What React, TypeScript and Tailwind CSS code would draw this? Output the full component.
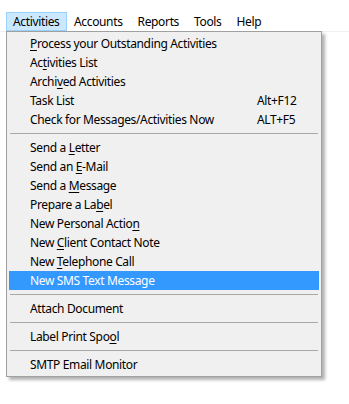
import React from 'react';

type MenuEntry =
  | { kind: 'sep' }
  | { kind: 'item'; label: string; mnemonic?: number; shortcut?: string; active?: boolean };

const MENU_BAR = ['Activities', 'Accounts', 'Reports', 'Tools', 'Help'];

// mnemonic = index of the underlined letter in label
const ENTRIES: MenuEntry[] = [
  { kind: 'item', label: 'Process your Outstanding Activities', mnemonic: 0 },
  { kind: 'item', label: 'Activities List', mnemonic: 2 },
  { kind: 'item', label: 'Archived Activities', mnemonic: 5 },
  { kind: 'item', label: 'Task List', shortcut: 'Alt+F12' },
  { kind: 'item', label: 'Check for Messages/Activities Now', shortcut: 'ALT+F5' },
  { kind: 'sep' },
  { kind: 'item', label: 'Send a Letter', mnemonic: 7 },
  { kind: 'item', label: 'Send an E-Mail', mnemonic: 8 },
  { kind: 'item', label: 'Send a Message', mnemonic: 7 },
  { kind: 'item', label: 'Prepare a Label', mnemonic: 12 },
  { kind: 'item', label: 'New Personal Action', mnemonic: 18 },
  { kind: 'item', label: 'New Client Contact Note', mnemonic: 4 },
  { kind: 'item', label: 'New Telephone Call', mnemonic: 4 },
  { kind: 'item', label: 'New SMS Text Message', active: true },
  { kind: 'sep' },
  { kind: 'item', label: 'Attach Document' },
  { kind: 'sep' },
  { kind: 'item', label: 'Label Print Spool', mnemonic: 15 },
  { kind: 'sep' },
  { kind: 'item', label: 'SMTP Email Monitor' },
];

function Label({ text, mnemonic }: { text: string; mnemonic?: number }) {
  if (mnemonic === undefined) return <span>{text}</span>;
  return (
    <span>
      {text.slice(0, mnemonic)}
      <span className="underline underline-offset-2">{text[mnemonic]}</span>
      {text.slice(mnemonic + 1)}
    </span>
  );
}

export default function App() {
  return (
    <div
      className="h-[404px] w-[349px] overflow-hidden bg-white text-[12px] tracking-[-0.35px] text-black"
      style={{ fontFamily: '"Noto Sans", "Open Sans", sans-serif' }}
    >
      {/* Menu bar */}
      <div className="pt-[12px]">
        <div className="flex h-[19px] items-center pl-[6px]">
          {MENU_BAR.map((name, i) => (
            <div
              key={name}
              className={
                i === 0
                  ? 'flex h-[19px] items-center border border-[#99d1ff] bg-[#cce8ff] px-[6px]'
                  : 'flex h-[19px] items-center px-[7.5px]'
              }
            >
              {name}
            </div>
          ))}
        </div>
        <div className="h-px bg-[#f0f0f0]" />
      </div>

      {/* Dropdown */}
      <div className="-mt-px ml-[6px] w-[316px] border border-[#a0a0a0] bg-[#f0f0f0] px-[2px] py-[2px] shadow-[3px_3px_3px_rgba(0,0,0,0.3)]">
        {ENTRIES.map((entry, i) =>
          entry.kind === 'sep' ? (
            <div key={i} className="mx-px my-[4px] h-px bg-[#a8a8a8]" />
          ) : (
            <div
              key={i}
              className={`flex h-[19px] items-center pl-[21px] ${
                entry.active ? 'bg-[#3399ff] text-white' : ''
              }`}
            >
              <div className="w-[227px]">
                <Label text={entry.label} mnemonic={entry.mnemonic} />
              </div>
              {entry.shortcut && <div>{entry.shortcut}</div>}
            </div>
          )
        )}
      </div>
    </div>
  );
}
